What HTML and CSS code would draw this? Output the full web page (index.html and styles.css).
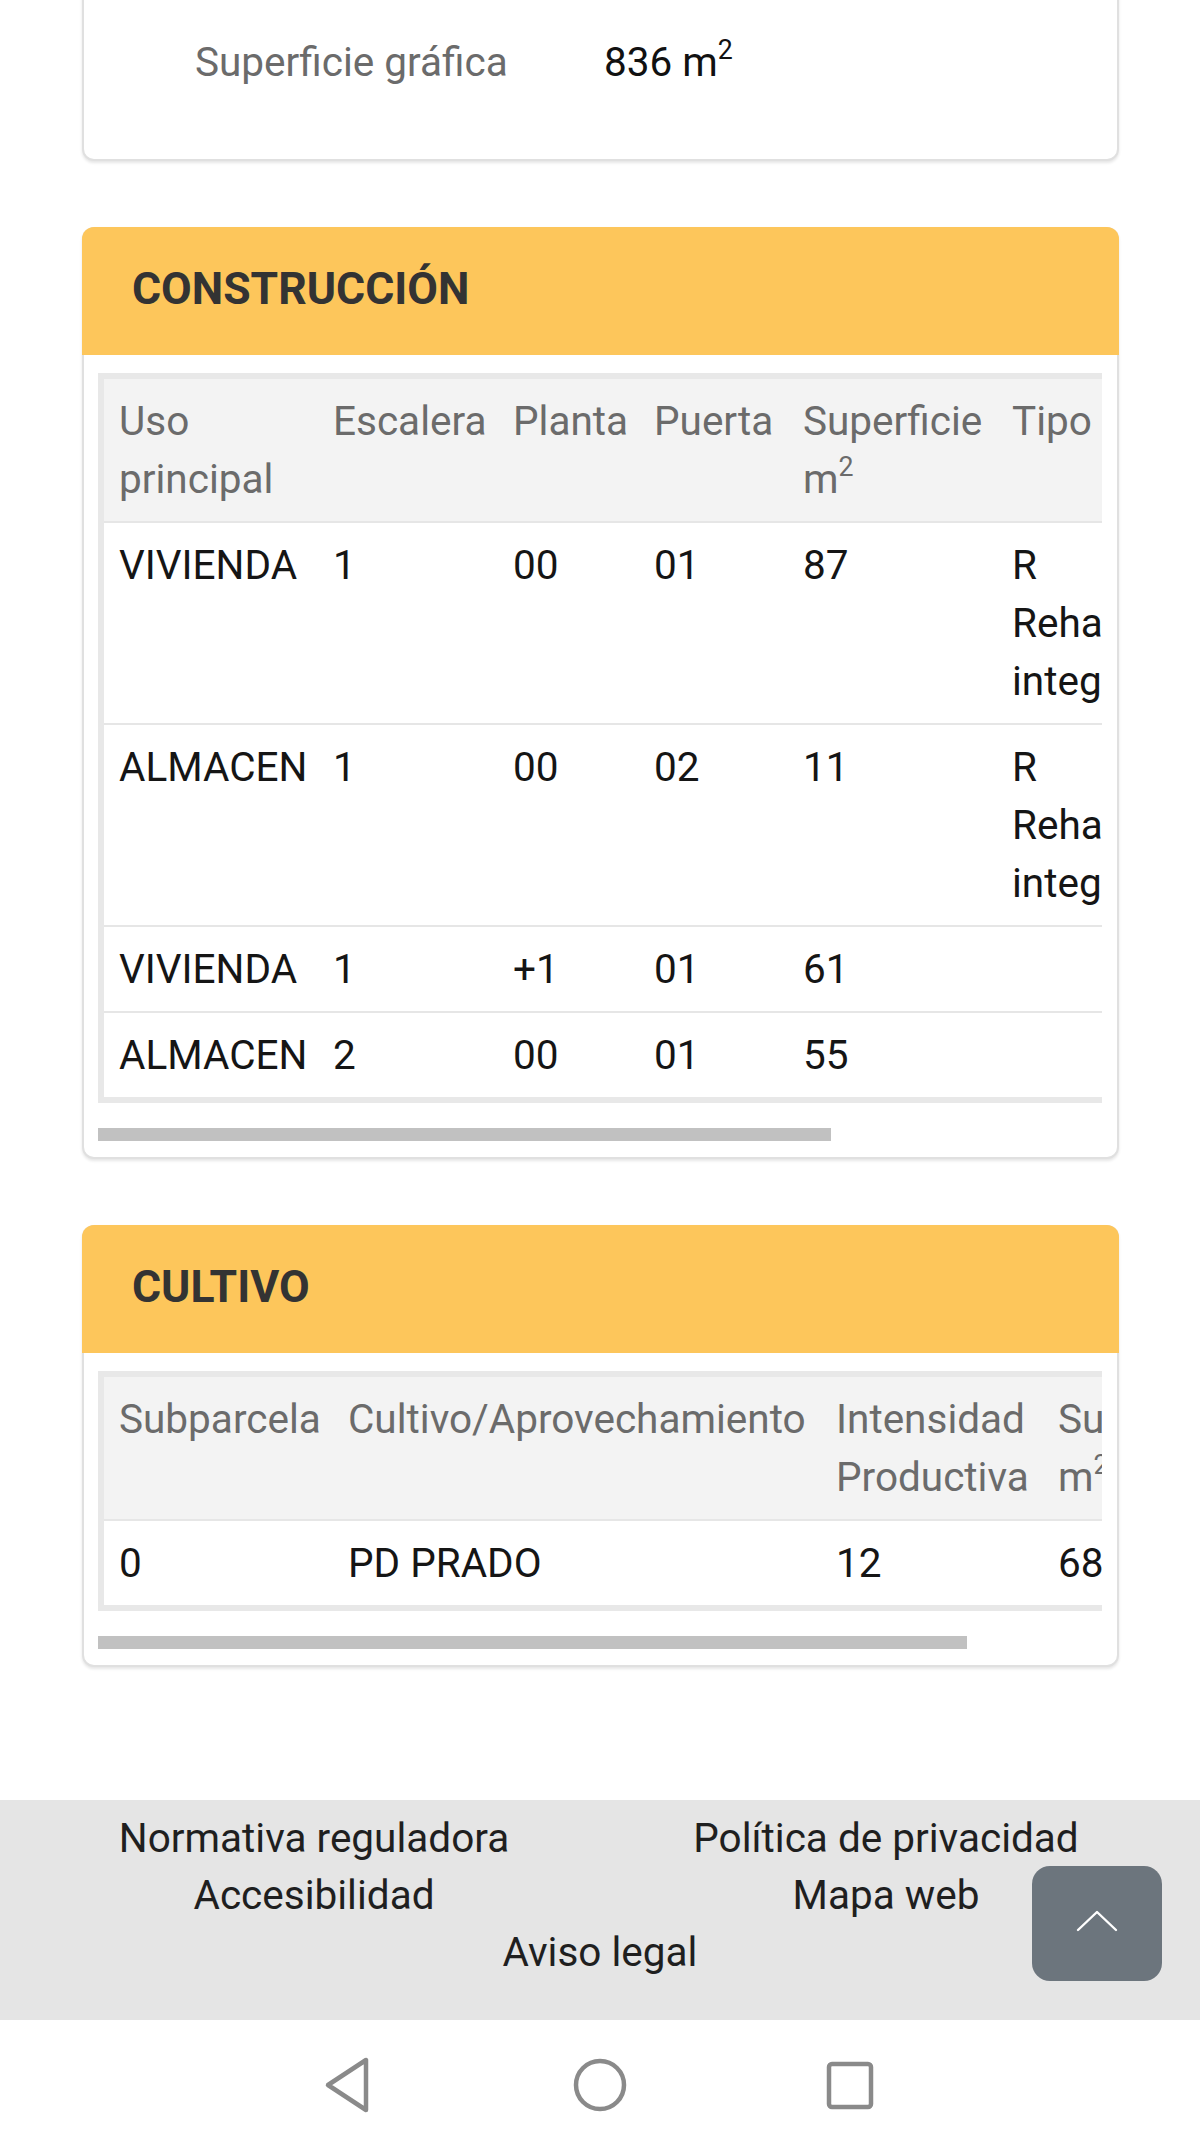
FILE: index.html
```html
<!DOCTYPE html>
<html lang="es">
<head>
<meta charset="utf-8">
<title>Consulta descriptiva</title>
<link rel="stylesheet" href="styles.css">
</head>
<body>
<main class="page">
  <section class="card card-cut">
    <div class="info-row">
      <span class="info-label">Superficie gráfica</span>
      <span class="info-value">836 m<sup>2</sup></span>
    </div>
  </section>

  <section class="card">
    <h2 class="card-title">CONSTRUCCIÓN</h2>
    <div class="card-body">
      <div class="table-scroll">
        <table class="data-table table-construccion">
          <colgroup>
            <col class="c-uso"><col class="c-esc"><col class="c-planta"><col class="c-puerta"><col class="c-sup"><col class="c-tipo">
          </colgroup>
          <thead>
            <tr><th>Uso<br>principal</th><th>Escalera</th><th>Planta</th><th>Puerta</th><th>Superficie<br>m<sup>2</sup></th><th>Tipo</th></tr>
          </thead>
          <tbody>
            <tr><td>VIVIENDA</td><td>1</td><td>00</td><td>01</td><td>87</td><td>R<br>Rehabilitación<br>integral</td></tr>
            <tr><td>ALMACEN</td><td>1</td><td>00</td><td>02</td><td>11</td><td>R<br>Rehabilitación<br>integral</td></tr>
            <tr><td>VIVIENDA</td><td>1</td><td>+1</td><td>01</td><td>61</td><td></td></tr>
            <tr><td>ALMACEN</td><td>2</td><td>00</td><td>01</td><td>55</td><td></td></tr>
          </tbody>
        </table>
      </div>
      <div class="scrollbar"><div class="scroll-thumb thumb-construccion"></div></div>
    </div>
  </section>

  <section class="card">
    <h2 class="card-title">CULTIVO</h2>
    <div class="card-body">
      <div class="table-scroll">
        <table class="data-table table-cultivo">
          <colgroup>
            <col class="c-subp"><col class="c-cult"><col class="c-int"><col class="c-supc">
          </colgroup>
          <thead>
            <tr><th>Subparcela</th><th>Cultivo/Aprovechamiento</th><th>Intensidad<br>Productiva</th><th>Superficie<br>m<sup>2</sup></th></tr>
          </thead>
          <tbody>
            <tr><td>0</td><td>PD PRADO</td><td>12</td><td>68</td></tr>
          </tbody>
        </table>
      </div>
      <div class="scrollbar"><div class="scroll-thumb thumb-cultivo"></div></div>
    </div>
  </section>
</main>

<footer class="site-footer">
  <ul class="footer-links">
    <li><a href="#">Normativa reguladora</a></li>
    <li><a href="#">Política de privacidad</a></li>
    <li><a href="#">Accesibilidad</a></li>
    <li><a href="#">Mapa web</a></li>
    <li><a href="#">Aviso legal</a></li>
  </ul>
  <a class="to-top" href="#" aria-label="Volver arriba">
    <svg width="42" height="22" viewBox="0 0 42 22"><polyline points="2,20 21,2 40,20" fill="none" stroke="#ffffff" stroke-width="2.4" stroke-linecap="round" stroke-linejoin="round"/></svg>
  </a>
</footer>

<div class="nav-bar">
  <svg class="nav-icons" width="1200" height="128" viewBox="0 0 1200 128">
    <polygon points="328,65 366,40 366,90" fill="none" stroke="#8a8a8a" stroke-width="4.5" stroke-linejoin="round"/>
    <circle cx="600" cy="65" r="24" fill="none" stroke="#8a8a8a" stroke-width="4.5"/>
    <rect x="829" y="44" width="42" height="43" rx="3" fill="none" stroke="#8a8a8a" stroke-width="4.5"/>
  </svg>
</div>
</body>
</html>
```

FILE: styles.css
```css
* { box-sizing: border-box; }

html, body {
  margin: 0;
  padding: 0;
  background: #ffffff;
}

body {
  font-family: Roboto, "Liberation Sans", Arial, sans-serif;
  font-size: 40.5px;
  line-height: 58px;
  color: #1a1a1a;
  height: 2150px;
  overflow: hidden;
}

sup {
  font-size: 0.66em;
  line-height: 0;
  vertical-align: 0.62em;
}

.page {
  padding: 0 81px 133px 82px;
}

.card {
  border: 2px solid #e0e0e0;
  border-radius: 12px;
  background: #ffffff;
  box-shadow: 0 2px 3px rgba(0, 0, 0, 0.10);
  margin-top: 66px;
}

.card-cut {
  margin-top: -40px;
  padding: 71px 0 68px 0;
}

.info-row {
  display: grid;
  grid-template-columns: 409px auto;
  padding-left: 111px;
}

.info-label {
  color: #6b6b6b;
}

.info-value {
  color: #111111;
}

.card-title {
  margin: -2px -2px 0 -2px;
  padding: 36px 48px 40px 50px;
  background: #fdc65b;
  border-radius: 12px 12px 0 0;
  font-size: 44.5px;
  line-height: 52px;
  font-weight: 700;
  color: #333333;
}

.card-body {
  padding: 18px 15px 16px 14px;
}

.table-scroll {
  overflow: hidden;
}

.data-table {
  border-collapse: separate;
  border-spacing: 0;
  table-layout: fixed;
  border: 6px solid #e8e8e8;
}

.data-table th,
.data-table td {
  padding: 13px 15px 13px 15px;
  text-align: left;
  vertical-align: top;
  white-space: nowrap;
  overflow: hidden;
}

.data-table th {
  background: #f3f3f3;
  color: #6b6b6b;
  font-weight: 400;
}

.data-table td {
  border-top: 2px solid #e6e6e6;
  color: #151515;
  background: #ffffff;
}

.table-construccion { width: 1195px; }
.c-uso { width: 214px; }
.c-esc { width: 180px; }
.c-planta { width: 141px; }
.c-puerta { width: 149px; }
.c-sup { width: 209px; }
.c-tipo { width: 290px; }

.table-cultivo { width: 1201px; }
.c-subp { width: 229px; }
.c-cult { width: 488px; }
.c-int { width: 222px; }
.c-supc { width: 250px; }

.scrollbar {
  margin-top: 25px;
  height: 13px;
}

.scroll-thumb {
  height: 13px;
  background: #c1c1c1;
}

.thumb-construccion { width: 733px; }
.thumb-cultivo { width: 869px; }

.site-footer {
  position: relative;
  background: #e5e5e5;
  height: 220px;
  padding-top: 10px;
}

.footer-links {
  list-style: none;
  margin: 0 auto;
  padding: 0;
  width: 1144px;
  display: flex;
  flex-wrap: wrap;
  justify-content: center;
  line-height: 57px;
}

.footer-links li {
  width: 572px;
  text-align: center;
}

.footer-links a {
  color: #1f1f1f;
  text-decoration: none;
}

.to-top {
  position: absolute;
  top: 66px;
  right: 38px;
  width: 130px;
  height: 115px;
  border-radius: 18px;
  background: #6c757d;
  display: flex;
  align-items: center;
  justify-content: center;
  padding-bottom: 6px;
}

.nav-bar {
  height: 128px;
  background: #ffffff;
}

.nav-icons {
  display: block;
}
```
